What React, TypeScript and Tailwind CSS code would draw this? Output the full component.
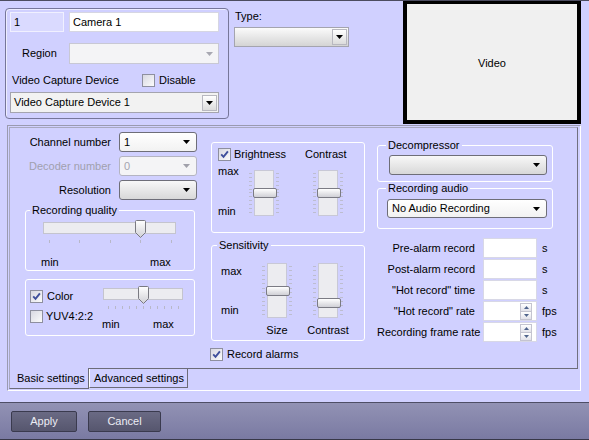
import React from "react";

const Arrow = ({ color = "#000" }: { color?: string }) => (
  <svg width="7" height="4" viewBox="0 0 7 4" className="shrink-0">
    <path d="M0 0h7L3.5 4z" fill={color} />
  </svg>
);

function Check({ checked = false }: { checked?: boolean }) {
  return (
    <span className="flex h-[13px] w-[13px] shrink-0 items-center justify-center border border-[#8e8f9f] bg-linear-to-br from-[#d8d8e2] to-[#fbfbfb]">
      {checked && (
        <svg width="9" height="9" viewBox="0 0 9 9">
          <path d="M1.2 4.4l2.3 2.4L7.9 1.4" fill="none" stroke="#3f4f9c" strokeWidth="1.9" />
        </svg>
      )}
    </span>
  );
}

interface SelectProps {
  value?: string;
  className?: string;
  disabled?: boolean;
  white?: boolean;
}

// rounded "xp style" combo
function ThemedSelect({ value = "", className = "", disabled = false, white = false }: SelectProps) {
  const look = disabled
    ? "border-[#b4b4c2] bg-[#f4f4f6] text-[#a4a4b0]"
    : white
    ? "border-[#6e6e78] bg-linear-to-b from-white to-[#f2f2f2]"
    : "border-[#6e6e78] bg-linear-to-b from-[#f8f8f8] to-[#d8d8d8]";
  return (
    <div className={`flex items-center justify-between rounded-[3px] border pl-[4px] pr-[6px] ${look} ${className}`}>
      <span>{value}</span>
      <Arrow color={disabled ? "#a0a0aa" : "#000"} />
    </div>
  );
}

// old square combo with drop button
function ClassicSelect({ value = "", className = "", gradient = false }: { value?: string; className?: string; gradient?: boolean }) {
  return (
    <div
      className={`flex items-center border border-[#a4a4ae] pl-[3px] pr-px ${
        gradient ? "bg-linear-to-b from-[#fbfbfb] to-[#d4d4d4]" : "bg-[#f2f2f2]"
      } ${className}`}
    >
      <span className="flex-1">{value}</span>
      <span className="flex h-[16px] w-[15px] items-center justify-center border border-[#b8b8c0] bg-linear-to-b from-white to-[#dcdcdc]">
        <Arrow />
      </span>
    </div>
  );
}

function HSlider({ width, thumb, ticks, id }: { width: string; thumb: number; ticks: number[]; id: string }) {
  return (
    <div className={`relative ${width}`}>
      <div className="h-[12px] border border-[#c4c4ce] bg-[#ececf0]" />
      <div className="relative mt-[6px] h-[3px]">
        {ticks.map((t) => (
          <span key={t} className="absolute top-0 h-[3px] w-px bg-[#b8b8c8]" style={{ left: t }} />
        ))}
      </div>
      <svg className="absolute top-[-2px]" style={{ left: thumb - 5 }} width="11" height="18" viewBox="0 0 11 18">
        <defs>
          <linearGradient id={id} x1="0" y1="0" x2="0" y2="1">
            <stop offset="0" stopColor="#ffffff" />
            <stop offset="1" stopColor="#d0d0d6" />
          </linearGradient>
        </defs>
        <path d="M1.5 0.5h8a1 1 0 0 1 1 1v11l-5 5l-5-5v-11a1 1 0 0 1 1-1z" fill={`url(#${id})`} stroke="#7a7a82" />
      </svg>
    </div>
  );
}

function VSlider({ height, thumb, ticks }: { height: string; thumb: number; ticks: number }) {
  const marks = Array.from({ length: ticks }, (_, i) => i);
  const col = (
    <div className="flex w-[3px] flex-col justify-between py-[3px]">
      {marks.map((i) => (
        <span key={i} className="h-px w-[3px] bg-[#bdbdd0]" />
      ))}
    </div>
  );
  return (
    <div className={`flex w-[30px] ${height}`}>
      {col}
      <div className="relative mx-[2px] w-[20px] border border-[#c8c8d6] bg-[#ececf0]">
        <div
          className="absolute left-[-2px] h-[10px] w-[24px] rounded-[2px] border border-[#7b7b84] bg-linear-to-b from-white to-[#d0d0d6]"
          style={{ top: thumb }}
        />
      </div>
      {col}
    </div>
  );
}

function Row({ label, muted = false, className = "", children }: { label: string; muted?: boolean; className?: string; children: React.ReactNode }) {
  return (
    <div className={`flex items-center ${className}`}>
      <span className={`w-[97px] whitespace-nowrap text-right ${muted ? "text-[#a0a0ae]" : ""}`}>{label}</span>
      <div className="ml-[8px]">{children}</div>
    </div>
  );
}

function Spinner() {
  return (
    <div className="flex h-[17px] w-[12px] flex-col border border-[#c4c4d0]">
      <span className="flex flex-1 items-center justify-center border-b border-[#c4c4d0] bg-linear-to-b from-white to-[#e2e2ea]">
        <svg width="5" height="3" viewBox="0 0 5 3">
          <path d="M0 3h5L2.5 0z" fill="#50648c" />
        </svg>
      </span>
      <span className="flex flex-1 items-center justify-center bg-linear-to-b from-white to-[#e2e2ea]">
        <svg width="5" height="3" viewBox="0 0 5 3">
          <path d="M0 0h5L2.5 3z" fill="#50648c" />
        </svg>
      </span>
    </div>
  );
}

const fields = [
  { label: "Pre-alarm record", unit: "s", spin: false },
  { label: "Post-alarm record", unit: "s", spin: false },
  { label: "\"Hot record\" time", unit: "s", spin: false },
  { label: "\"Hot record\" rate", unit: "fps", spin: true },
  { label: "Recording frame rate", unit: "fps", spin: true },
];

export default function App() {
  return (
    <div className="flex h-[440px] w-[589px] flex-col overflow-hidden border-t border-[#4c4c60] bg-[#d0d0ff] font-['Liberation_Sans',Arial,sans-serif] text-[11px] leading-[13px] text-black">
      {/* camera header */}
      <div className="flex h-[123px] items-start">
        <div className="ml-[5px] mt-[7px] flex h-[111px] w-[224px] flex-col rounded-[4px] border border-[#76769a] pl-[4px] pt-[3px] shadow-[inset_1px_1px_0_#ececff]">
          <div className="flex gap-[5px]">
            <div className="flex h-[20px] w-[54px] items-center border border-[#f0f0ff] bg-[#dadaff] pl-[3px]">1</div>
            <div className="flex h-[20px] w-[150px] items-center border border-[#d6d6e2] bg-white pl-[3px]">Camera 1</div>
          </div>
          <div className="mt-[11px] flex items-center">
            <span className="w-[59px] pl-[12px]">Region</span>
            <div className="flex h-[21px] w-[150px] items-center justify-end border border-[#c8c8d4] bg-[#f4f4f6] pr-[5px]">
              <Arrow color="#a8a8b2" />
            </div>
          </div>
          <div className="mt-[9px] flex h-[14px] items-center pl-[2px]">
            <span className="w-[130px] whitespace-nowrap">Video Capture Device</span>
            <Check />
            <span className="ml-[4px]">Disable</span>
          </div>
          <ClassicSelect value="Video Capture Device 1" className="mt-[5px] h-[21px] w-[209px]" />
        </div>

        <div className="ml-[5px] mt-[9px] flex flex-col">
          <span className="pl-px">Type:</span>
          <ClassicSelect gradient className="mt-[4px] h-[20px] w-[115px]" />
        </div>

        <div className="-mt-px ml-auto mr-[8px] flex h-[124px] w-[178px] items-center justify-center border-4 border-black bg-[#f0f0f0] pt-[3px]">
          Video
        </div>
      </div>

      {/* tab control */}
      <div className="ml-[7px] mt-px flex h-[266px] w-[574px] flex-col border border-b-white border-l-[#9a9ab0] border-r-white border-t-[#9a9ab0] pl-px pt-px">
        <div className="flex h-[241px] w-[569px] items-start border-l border-r border-t border-l-[#a8a8c0] border-r-[#707080] border-t-[#a8a8c0] pl-[4px] pt-[4px]">
          {/* left column */}
          <div className="flex w-[186px] flex-col">
            <Row label="Channel number">
              <ThemedSelect white value="1" className="h-[20px] w-[78px]" />
            </Row>
            <Row label="Decoder number" muted className="mt-[4px]">
              <ThemedSelect disabled value="0" className="h-[20px] w-[78px]" />
            </Row>
            <Row label="Resolution" className="mt-[4px]">
              <ThemedSelect className="h-[20px] w-[78px]" />
            </Row>

            <fieldset className="ml-[11px] mt-[4px] h-[67px] w-[170px] rounded-[3px] border border-white">
              <legend className="ml-[4px] px-[2px]">Recording quality</legend>
              <div className="pl-[17px] pt-[5px]">
                <HSlider id="rq" width="w-[133px]" thumb={97} ticks={[6, 36, 67, 97, 128]} />
              </div>
              <div className="mt-[13px] flex pl-[15px]">
                <span className="w-[109px]">min</span>
                <span>max</span>
              </div>
            </fieldset>

            <div className="ml-[11px] mt-[8px] flex h-[57px] w-[170px] rounded-[3px] border border-white pl-[4px] pt-[7px]">
              <div className="flex w-[73px] flex-col">
                <div className="mt-[3px] flex items-center gap-[4px]">
                  <Check checked />
                  <span>Color</span>
                </div>
                <div className="mt-[7px] flex items-center gap-[3px]">
                  <Check />
                  <span>YUV4:2:2</span>
                </div>
              </div>
              <div className="mt-px flex flex-col">
                <HSlider id="cl" width="w-[80px]" thumb={40} ticks={[5, 12, 19, 26, 33, 40, 47, 54, 61, 68, 75]} />
                <div className="-ml-px mt-[9px] flex">
                  <span className="w-[51px]">min</span>
                  <span>max</span>
                </div>
              </div>
            </div>
          </div>

          {/* middle column */}
          <div className="ml-[11px] mt-[10px] flex w-[154px] flex-col">
            <div className="flex h-[91px] flex-col rounded-[3px] border border-white pl-[6px] pt-[5px]">
              <div className="flex items-center">
                <Check checked />
                <span className="ml-[3px] w-[71px]">Brightness</span>
                <span>Contrast</span>
              </div>
              <div className="mt-[4px] flex">
                <div className="flex h-[53px] w-[31px] flex-col justify-between">
                  <span>max</span>
                  <span>min</span>
                </div>
                <div className="mt-[5px]">
                  <VSlider height="h-[46px]" thumb={17} ticks={11} />
                </div>
                <div className="ml-[34px] mt-[5px]">
                  <VSlider height="h-[46px]" thumb={17} ticks={11} />
                </div>
              </div>
            </div>

            <fieldset className="mt-[6px] h-[102px] rounded-[3px] border border-white">
              <legend className="ml-[5px] px-[2px]">Sensitivity</legend>
              <div className="mt-[11px] flex pl-[9px]">
                <div className="flex h-[55px] w-[41px] flex-col justify-between pb-px pt-[2px]">
                  <span>max</span>
                  <span>min</span>
                </div>
                <div className="flex w-[30px] flex-col items-center">
                  <VSlider height="h-[55px]" thumb={22} ticks={12} />
                  <span className="mt-[6px] whitespace-nowrap">Size</span>
                </div>
                <div className="ml-[21px] flex w-[30px] flex-col items-center">
                  <VSlider height="h-[55px]" thumb={34} ticks={12} />
                  <span className="mt-[6px] whitespace-nowrap">Contrast</span>
                </div>
              </div>
            </fieldset>

            <div className="-ml-px mt-[7px] flex items-center">
              <Check checked />
              <span className="ml-[4px]">Record alarms</span>
            </div>
          </div>

          {/* right column */}
          <div className="ml-[12px] mt-[7px] flex w-[180px] flex-col">
            <fieldset className="h-[43px] w-[176px] rounded-[3px] border border-white">
              <legend className="ml-[8px] px-[2px]">Decompressor</legend>
              <div className="pl-[11px] pt-[3px]">
                <ThemedSelect className="h-[20px] w-[158px]" />
              </div>
            </fieldset>
            <fieldset className="h-[47px] w-[176px] rounded-[3px] border border-white">
              <legend className="ml-[8px] px-[2px]">Recording audio</legend>
              <div className="pl-[9px] pt-[4px]">
                <ThemedSelect white value="No Audio Recording" className="h-[19px] w-[160px]" />
              </div>
            </fieldset>

            <div className="mt-[9px] flex flex-col gap-px">
              {fields.map((f) => (
                <div key={f.label} className="flex h-[20px] items-center">
                  <span className="w-[98px] whitespace-nowrap text-right">{f.label}</span>
                  <div className="ml-[8px] flex h-[20px] w-[54px] items-center justify-end border border-[#d8d8e6] bg-white pr-[4px]">
                    {f.spin && <Spinner />}
                  </div>
                  <span className="ml-[5px]">{f.unit}</span>
                </div>
              ))}
            </div>
          </div>
        </div>

        {/* tabs */}
        <div className="flex h-[21px] w-[569px]">
          <div className="flex w-[80px] items-center border-b border-l border-r border-b-[#6c6c78] border-l-[#a8a8c0] border-r-[#6c6c78] pl-[7px]">
            Basic settings
          </div>
          <div className="flex-1 border-t border-[#6c6c78]">
            <div className="flex h-[19px] w-[99px] items-center border-b border-l border-r border-b-[#6c6c78] border-l-white border-r-[#6c6c78] pl-[4px]">
              Advanced settings
            </div>
          </div>
        </div>
      </div>

      {/* bottom bar */}
      <div className="mt-[11px] flex h-[38px] items-start gap-[11px] border-b border-t border-b-[#383848] border-t-[#4e4e66] bg-linear-to-b from-[#9292b4] to-[#7a7aa2] pl-[11px] pt-[8px]">
        <button className="h-[21px] w-[66px] rounded-[2px] border border-[#3a3a4e] bg-linear-to-b from-[#6a6a84] to-[#56566e] text-[#ececf4]">
          Apply
        </button>
        <button className="h-[21px] w-[73px] rounded-[2px] border border-[#3a3a4e] bg-linear-to-b from-[#6a6a84] to-[#56566e] text-[#ececf4]">
          Cancel
        </button>
      </div>
    </div>
  );
}
